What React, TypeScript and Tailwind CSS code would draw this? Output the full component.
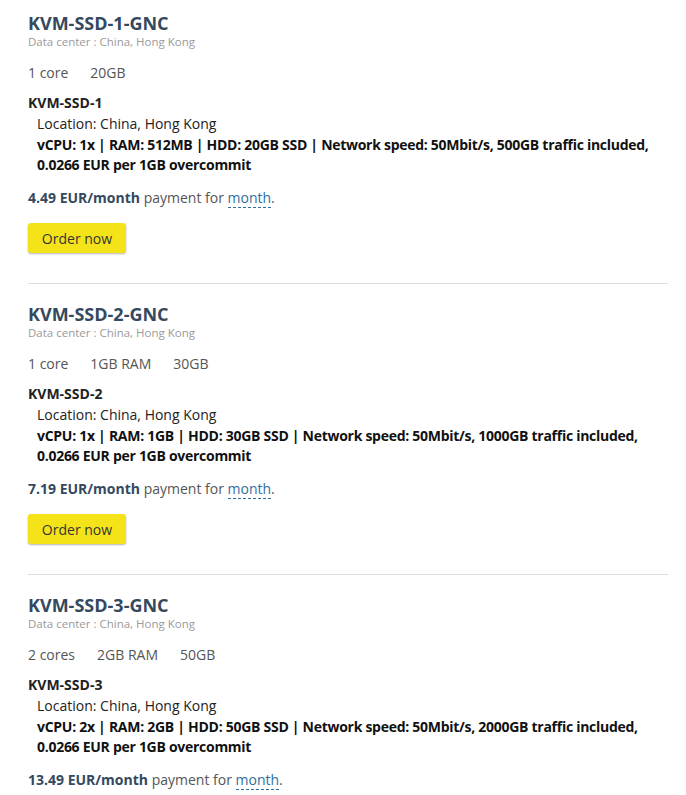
const plans = [
  {
    name: "KVM-SSD-1-GNC",
    short: "KVM-SSD-1",
    specs: ["1 core", "20GB"],
    line1: "vCPU: 1x | RAM: 512MB | HDD: 20GB SSD | Network speed: 50Mbit/s, 500GB traffic included,",
    price: "4.49",
  },
  {
    name: "KVM-SSD-2-GNC",
    short: "KVM-SSD-2",
    specs: ["1 core", "1GB RAM", "30GB"],
    line1: "vCPU: 1x | RAM: 1GB | HDD: 30GB SSD | Network speed: 50Mbit/s, 1000GB traffic included,",
    price: "7.19",
  },
  {
    name: "KVM-SSD-3-GNC",
    short: "KVM-SSD-3",
    specs: ["2 cores", "2GB RAM", "50GB"],
    line1: "vCPU: 2x | RAM: 2GB | HDD: 50GB SSD | Network speed: 50Mbit/s, 2000GB traffic included,",
    price: "13.49",
  },
];

function Plan({ plan, last }: { plan: (typeof plans)[number]; last: boolean }) {
  return (
    <div>
      <h2 className="text-[18px] leading-[24px] font-bold text-[#34495e]">{plan.name}</h2>
      <div className="text-[11.5px] leading-[14px] text-[#9a9a9a]">Data center : China, Hong Kong</div>

      <div className="mt-[14px] flex gap-[22px] text-[14px] leading-[20px] text-[#555]">
        {plan.specs.map((s) => (
          <span key={s}>{s}</span>
        ))}
      </div>

      <div className="mt-[10px] text-[14px] leading-[20px] font-bold text-[#222]">{plan.short}</div>
      <div className="mt-[1px] pl-[9px] text-[14px] leading-[20px] text-[#222]">Location: China, Hong Kong</div>
      <div className="mt-[1px] pl-[9px] text-[14px] leading-[20px] font-bold tracking-[-0.02em] text-[#111] whitespace-nowrap">
        {plan.line1}
        <br />
        0.0266 EUR per 1GB overcommit
      </div>

      <p className="mt-[13px] text-[14px] leading-[20px] text-[#555]">
        <b className="text-[#34495e]">{plan.price} EUR/month</b> payment for{" "}
        <span className="text-[#2f6f9f] border-b border-dashed border-[#2f6f9f]">month</span>.
      </p>

      {!last && (
        <>
          <button className="mt-[15px] h-[30px] w-[98px] rounded-[3px] bg-[#f5e31a] text-[14px] text-[#333] shadow-[0_1px_2px_rgba(0,0,0,0.3)]">
            Order now
          </button>
          <hr className="mt-[30px] mb-[18px] border-t border-[#dddddd]" />
        </>
      )}
    </div>
  );
}

export default function App() {
  return (
    <div className="min-h-screen bg-white font-['Open_Sans',sans-serif]">
      <div className="ml-[28px] w-[640px] pt-[11px]">
        {plans.map((p, i) => (
          <Plan key={p.name} plan={p} last={i === plans.length - 1} />
        ))}
      </div>
    </div>
  );
}
